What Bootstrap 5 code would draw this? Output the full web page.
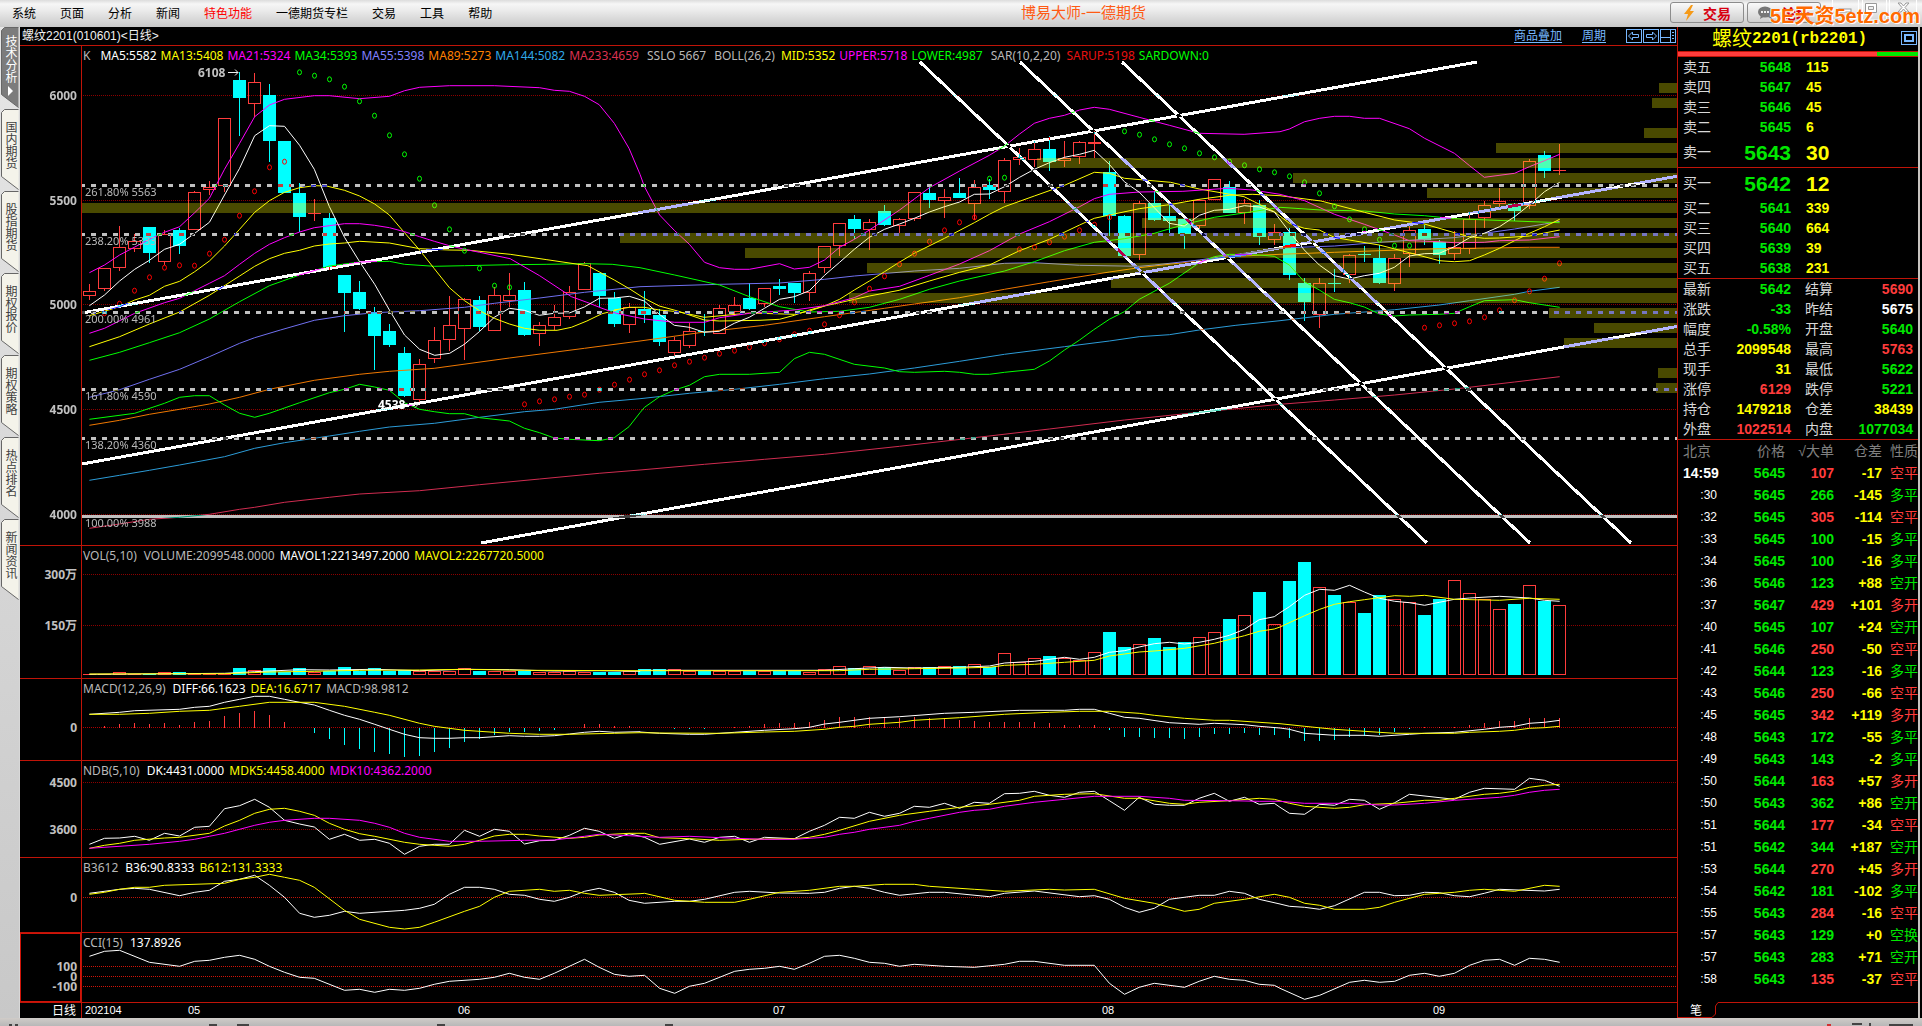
<!DOCTYPE html>
<html lang="zh-CN">
<head>
<meta charset="utf-8">
<meta name="viewport" content="width=device-width, initial-scale=1">
<title>博易大师-一德期货</title>
<link rel="stylesheet" href="https://cdn.jsdelivr.net/npm/bootstrap@5.3.0/dist/css/bootstrap.min.css">
<script src="https://cdn.jsdelivr.net/npm/bootstrap@5.3.0/dist/js/bootstrap.bundle.min.js"></script>
<style>
:root{--line:#c01408;--up:#ff3c3c;--dn:#00e800;--yl:#ffff00}
body{background:#000;color:#d8d8d8;font:12px/1 "Liberation Sans","Noto Sans CJK SC",sans-serif;overflow-x:hidden}
button{font-family:inherit}
.topbar{height:27px;background:linear-gradient(#dcdcdc 0,#f6f6f6 4px,#ececec 10px,#c8c8c8 27px);padding-left:12px}
.topbar .menu{gap:24px}
.topbar a{color:#000;text-decoration:none}
.topbar a.hot{color:#f00}
.apptitle{font-size:15px;color:#ff5a14;left:1021px;top:5px}
.tbtn{width:74px;height:21px;border:1px solid #8c8c8c;border-radius:3px;background:linear-gradient(#fafafa,#cfcfcf);color:#d80010;font:bold 14px/1 "Noto Sans CJK SC",sans-serif;padding:0}
.tools{right:101px;top:2px;gap:3px}
.wctl{right:4px;top:0}
.mark5{right:2px;top:5px;font:bold 20px/22px "Liberation Sans","Noto Sans CJK SC",sans-serif;color:#ff6a00;text-shadow:1px 1px 0 #fff,-1px 0 0 #fff}
.side{width:20px;background:linear-gradient(#e6e6e6,#c8c8c8);border-right:1px solid #d8d8d8}
.vtab{display:block;width:18px;height:81px;margin:0 0 1px 1px;padding:0;border:0;background:none;color:#404040;font-size:12px;line-height:16px;position:relative}
.vtab svg{position:absolute;left:0;top:0}
.vtab span{position:relative;display:block;writing-mode:vertical-rl;text-orientation:upright;text-align:start;padding-top:12px;margin:0 auto;height:81px;width:16px}
.vtab.on{color:#fff}
.vtab.on span{padding-top:8px}
.titlebar{height:19px;border-bottom:1px solid var(--line);padding-left:2px;color:#f0f0f0;background:#000}
.titlebar a{color:#78b8ff;text-decoration:underline;text-underline-offset:2px;margin-right:20px}
.pane{position:relative;border-bottom:1px solid var(--line);background:#000}
.pane svg{display:block;width:100%}
.legend-row{position:absolute;left:63px;top:0;height:20px;font:12px/20px "Noto Sans",sans-serif;gap:8px;white-space:nowrap;color:#b8b8b8}
.legend-row>span{display:flex;gap:5px}
.legend-row.tight>span{gap:4px}
.legend-row i{font-style:normal}
.legend-row i:first-child{margin-left:2px}
.w{color:#fff}.y{color:#ff0}.m{color:#f0f}.g{color:#0f0}.b{color:#8080ff}.o{color:#ff8000}.s{color:#30a8e8}.p{color:#dc3250}.r{color:#e81010}
.quote{width:241px;border-left:1px solid var(--line);background:#000}
.edge{width:4px;background:linear-gradient(90deg,#c8c4c0 2px,#000 2px)}
.qtitle{height:24px;color:#ff0;font-size:20px;line-height:24px;padding:0 1px 0 34px}
.qtitle span{font:bold 16px/24px "Liberation Mono",monospace}
.force{height:6px;border-top:1px solid var(--line);border-bottom:1px solid var(--line)}
.force i{background:var(--up)}
.force b{background:#00e800}
.quote table{width:240px;table-layout:fixed;border-collapse:collapse;font-size:14px;line-height:14px}
.quote td,.quote th{padding:0;height:20px;vertical-align:middle;white-space:nowrap;font-weight:normal}
.quote td:first-child:not(.tm),.quote th:first-child{padding-left:5px}
.quote .vcol{padding-left:15px;text-align:left}
.quote .lab2{padding-left:14px}
.quote .vend{padding-right:5px}
.quote .num{font-weight:bold;text-align:right}
.quote .vcol.num{text-align:left}
.quote .big td{height:30px}
.quote .big .num{font-size:21px;line-height:21px}
.sect{border-bottom:1px solid var(--line)}
.quote .ticks td,.quote .ticks th{height:22px}
.ticks th{color:#808080}
.quote .tm{font-size:12px;text-align:right;padding-right:2px}
.quote .tm0{font-weight:bold}
.up{color:var(--up)}.dn{color:var(--dn)}.yl{color:var(--yl)}.wh{color:#fff}
.foot{height:8px;background:linear-gradient(#d0ccc8,#b8b8b8)}
.axis{fill:#c0c0c0;font:bold 12px "Noto Sans","Noto Sans CJK SC",sans-serif}
.axis.lit{fill:#fff}
.fib{fill:#b8b8b8;font:11px "Noto Sans",sans-serif}
.day{fill:#fff;font:11px "Liberation Sans","Noto Sans CJK SC",sans-serif}
.day.per{font-size:12px}
.diff{mix-blend-mode:difference;fill:none}
svg{isolation:isolate}
</style>
</head>
<body>
<svg width="0" height="0" class="position-absolute"><defs>
<path id="tab" d="M17.500.5H3.500L.500 3.500V67.500L17.500 80.500"/>
</defs></svg>
<div class="d-flex flex-column min-vh-100">
<header class="topbar d-flex align-items-center position-relative">
  <nav class="menu d-flex"><a href="#">系统</a><a href="#">页面</a><a href="#">分析</a><a href="#">新闻</a><a href="#" class="hot">特色功能</a><a href="#">一德期货专栏</a><a href="#">交易</a><a href="#">工具</a><a href="#">帮助</a></nav>
  <div class="apptitle position-absolute">博易大师-一德期货</div>
  <div class="tools d-flex position-absolute">
    <button class="tbtn d-flex align-items-center justify-content-center gap-2"><svg width="12" height="16"><path d="M8 0L1 9h4L3 16l8-10H7l3-6z" fill="#f59a18"/></svg>交易</button>
    <button class="tbtn d-flex align-items-center justify-content-center gap-2"><svg width="16" height="14"><ellipse cx="7" cy="6" rx="7" ry="5.500" fill="#777"/><path d="M3 9l-1 4 5-3zM12 5c4 0 5 5 1 6l1 2-4-2z" fill="#777"/><path d="M3 6h2M6 6h2M9 6h2" stroke="#eee" stroke-width="2"/></svg>论坛</button>
  </div>
  <svg class="wctl position-absolute" width="88" height="24"><g fill="none" stroke="#fff" stroke-width="1"><path d="M2.500 0V20H28.500V0M32.500 0V20H56.500V0M59.500 0V20H86.500V0"/></g><rect x="9" y="9" width="12" height="3" fill="#fff" stroke="#999"/><path d="M35.500 3.500h11v9h-11zM38.500 6.500h5v3h-5z" fill="#fff" fill-rule="evenodd" stroke="#999"/><path d="M68 3h3l2.500 3 2.500-3h3l-4 4.500 4 4.500h-3l-2.500-3-2.500 3h-3l4-4.500z" fill="#fff" stroke="#999"/></svg>
  <div class="mark5 position-absolute">5E天资5etz.com</div>
</header>
<div class="d-flex flex-grow-1">
  <aside class="side flex-shrink-0" id="side"></aside>
  <main class="flex-grow-1 overflow-hidden">
    <div class="titlebar d-flex align-items-center"><span>螺纹2201(010601)&lt;日线&gt;</span>
      <div class="ms-auto d-flex align-items-center"><a href="#">商品叠加</a><a href="#">周期</a>
      <svg width="51" height="16" fill="none" stroke="#78b8ff" shape-rendering="crispEdges"><path d="M.5 1.500h15v13H.5zM17.500 1.500h15v13h-15zM34.500 1.500h15v13h-15zM34.500 9.500h10M44.500 1.500v13"/><path d="M46 4.500h2M46 7.500h2M46 10.500h2"/><path d="M2.500 8L6.500 4v2.500h6v3h-6V12zM30.500 8L26.500 4v2.500h-6v3h6V12z" shape-rendering="auto"/></svg></div>
    </div>
    <div class="pane"><svg id="main" height="499"></svg>
      <div class="legend-row tight d-flex"><span>K</span><span><i class="w">MA5:5582</i><i class="y">MA13:5408</i><i class="m">MA21:5324</i><i class="g">MA34:5393</i><i class="b">MA55:5398</i><i class="o">MA89:5273</i><i class="s">MA144:5082</i><i class="p">MA233:4659</i></span><span>SSLO 5667</span><span>BOLL(26,2) <i class="y">MID:5352</i><i class="m">UPPER:5718</i><i class="g">LOWER:4987</i></span><span>SAR(10,2,20) <i class="r">SARUP:5198</i><i class="g">SARDOWN:0</i></span></div></div>
    <div class="pane"><svg id="vol" height="132"></svg><div class="legend-row d-flex"><span>VOL(5,10) <i>VOLUME:2099548.0000</i><i class="w">MAVOL1:2213497.2000</i><i class="y">MAVOL2:2267720.5000</i></span></div></div>
    <div class="pane"><svg id="macd" height="81"></svg><div class="legend-row d-flex"><span>MACD(12,26,9) <i class="w">DIFF:66.1623</i><i class="y">DEA:16.6717</i><i>MACD:98.9812</i></span></div></div>
    <div class="pane"><svg id="ndb" height="96"></svg><div class="legend-row d-flex"><span>NDB(5,10) <i class="w">DK:4431.0000</i><i class="y">MDK5:4458.4000</i><i class="m">MDK10:4362.2000</i></span></div></div>
    <div class="pane"><svg id="b3612" height="74"></svg><div class="legend-row d-flex"><span>B3612 <i class="w">B36:90.8333</i><i class="y">B612:131.3333</i></span></div></div>
    <div class="pane"><svg id="cci" height="69"></svg><div class="legend-row d-flex"><span>CCI(15) <i class="w">137.8926</i></span></div></div>
    <div><svg id="days" class="d-block w-100" height="15"></svg></div>
  </main>
  <section class="quote flex-shrink-0 d-flex flex-column">
    <div class="qtitle d-flex">螺纹<span>2201(rb2201)</span><svg class="ms-auto mt-1" width="16" height="15" fill="none" stroke="#78b8ff" shape-rendering="crispEdges"><path d="M.5.5h15v13H.5z"/><path d="M4 4h8v6H4z" stroke-width="2"/></svg></div>
    <div class="force d-flex"><i style="width:83%"></i><b class="flex-grow-1"></b></div>
    <div class="sect"><table id="asks"></table></div>
    <div class="sect"><table id="bids"></table></div>
    <div class="sect"><table id="stats"></table></div>
    <table class="ticks" id="ticks"></table>
    <svg class="mt-auto d-block" width="240" height="16" fill="none" stroke="#c01408"><path d="M-1 15.500H34L37.500 12V4L40 .5H240"/><text x="12" y="13" fill="#fff" stroke="none" font-size="12">笔</text></svg>
  </section>
  <div class="edge flex-shrink-0"></div>
</div>
<footer class="foot"><svg class="d-block w-100" height="8" stroke="#444" stroke-width="2"><path d="M9 7h3M15 7h3M209 7h8M237 7h12M437 7h8M665 7h8M1852 6h10M1870 5v3M1889 7h24" fill="none"/><path d="M1827 7h4" stroke="#d03030"/></svg></footer>
</div>
<script>
/* Sidebar tabs */
document.getElementById('side').innerHTML=['技术分析','国内期货','股指期货','期权报价','期权策略','热点排名','新闻资讯'].map((t,i)=>
 `<button class="vtab ${i?'':'on'}"><svg width="18" height="81"><use href="#tab" fill="${i?'#f4f3ea':'#7c7c7c'}" stroke="#666"/>${i?'':'<path d="M7 59l5 5-5 5z" fill="#fff"/>'}</svg><span>${t}</span></button>`).join('');

/* Order book, summary and tick list */
const el=id=>document.getElementById(id);
const cols=w=>'<colgroup>'+w.map(x=>`<col style="width:${x}px">`).join('')+'</colgroup>';
const book=(id,rows)=>el(id).innerHTML=cols([50,63,127])+rows.map(([n,p,v])=>
 `<tr class="${n[1]=='一'?'big':''}"><td>${n}</td><td class="num dn">${p}</td><td class="num yl vcol">${v}</td></tr>`).join('');
book('asks',[['卖五',5648,115],['卖四',5647,45],['卖三',5646,45],['卖二',5645,6],['卖一',5643,30]]);
book('bids',[['买一',5642,12],['买二',5641,339],['买三',5640,664],['买四',5639,39],['买五',5638,231]]);
el('stats').innerHTML=cols([40,73,62,65])+[
 ['最新','5642','dn','结算','5690','up'],['涨跌','-33','dn','昨结','5675','wh'],['幅度','-0.58%','dn','开盘','5640','dn'],
 ['总手','2099548','yl','最高','5763','up'],['现手','31','yl','最低','5622','dn'],['涨停','6129','up','跌停','5221','dn'],
 ['持仓','1479218','yl','仓差','38439','yl'],['外盘','1022514','up','内盘','1077034','dn']].map(r=>
 `<tr><td>${r[0]}</td><td class="num ${r[2]}">${r[1]}</td><td class="lab2">${r[3]}</td><td class="num vend ${r[5]}">${r[4]}</td></tr>`).join('');
const T=`14:59 5645 107 -17 空平|:30 5645 266 -145 多平|:32 5645 305 -114 空平|:33 5645 100 -15 多平|:34 5645 100 -16 多平|:36 5646 123 +88 空开|:37 5647 429 +101 多开|:40 5645 107 +24 空开|:41 5646 250 -50 空平|:42 5644 123 -16 多平|:43 5646 250 -66 空平|:45 5645 342 +119 多开|:48 5643 172 -55 多平|:49 5643 143 -2 多平|:50 5644 163 +57 多开|:50 5643 362 +86 空开|:51 5644 177 -34 空平|:51 5642 344 +187 空开|:53 5644 270 +45 多开|:54 5642 181 -102 多平|:55 5643 284 -16 空平|:57 5643 129 +0 空换|:57 5643 283 +71 空开|:58 5643 135 -37 空平`;
el('ticks').innerHTML=cols([41,66,49,48,36])+'<tr><th>北京</th><th class="text-end">价格</th><th class="text-end">√大单</th><th class="text-end">仓差</th><th class="text-end">性质</th></tr>'+
T.split('|').map((s,i)=>{const [t,p,v,d,k]=s.split(' ');const c=(k=='空平'||k=='多开')?'up':'dn';
 return `<tr><td class="${i?'tm':'tm0'} wh">${t}</td><td class="num dn">${p}</td><td class="num ${c}">${v}</td><td class="num yl">${d}</td><td class="text-end ${c}">${k}</td></tr>`}).join('');

/* Chart data. y values are stored in thirds of a pixel; curves are split into
   tiles, each with its own origin (x0,y0) and x density. */
const F={a:[0,0,2.45],b:[640,0,2.45],c:[1280,0,2.442],d:[0,330,2.45],e:[640,330,2.45],f:[1280,330,2.442],g:[0,660,2.45],h:[640,660,2.45],k:[1280,660,2.442],p:[400,230,3],q:[1080,130,3]};
const X=i=>89.5+15*i;
function curve(src,color){
 let fr,pts=[];
 src.trim().split(/\s+/).forEach(t=>{ if(F[t]){fr=F[t];return}
  const [x,y]=t.split(',').map(Number); pts.push((fr[0]+x/fr[2]).toFixed(1)+','+(fr[1]+y/3).toFixed(1)); });
 return `<polyline points="${pts.join(' ')}" fill="none" stroke="${color}"/>`;
}
const grid=(ys,c='#8c0000')=>ys.map(y=>`<path d="M83 ${y}.5H4000" stroke="${c}" stroke-dasharray="1 1" shape-rendering="crispEdges"/>`).join('');
const lab=(y,t)=>`<text class="axis" x="77" y="${y+5}" text-anchor="end">${t}</text>`;
const axisLine='<path d="M81.500 0V1100" stroke="#c01408" shape-rendering="crispEdges"/>';
const put=(id,top,s)=>el(id).innerHTML=`<g transform="translate(-20,${-top})"><rect x="0" y="0" width="5000" height="1100" fill="#000"/>${s}</g>`;

/* candles: open/close box top, bottom, wick top, wick bottom */
const C=[[0,`r872,889,852,899 r805,868,805,873 r742,805,678,812 r722,748,703,755 c682,758,682,788 r703,787,690,795 c690,738,684,762 r577,689,573,689 r560,569,544,585 r355,559,355,577 c240,293,216,407 r247,311,219,350 c285,422,252,486 c423,578,423,578 c579,650,549,695 r640,643,597,662 c654,802,640,810 c826,878,826,995 c877,926,843,930 c936,1007,921,1110 c993,1035,972,1041 c1059,1188,1041,1190 r1093,1199,1077,1205`],
[690,`r331,388,292,399 r286,331,198,363 r208,298,203,390 c210,290,198,303 r196,304,172,304 r196,214,129,230 c180,315,156,318 r286,313,277,348 r262,289,226,300 r187,262,168,266 r100,181,96,181 c129,198,129,231 c204,281,186,290 r231,286,220,309 c237,254,183,279 c255,335,237,348 r331,370,320,382 r304,349,280,355 c303,307,252,318 r235,313,225,313 r226,245,202,256 c204,237,160,240`],
[0,`r865,913,865,920 c858,866,837,884 c849,878,849,909 r820,880,814,903 r739,805,739,818 r670,737,670,767 c657,686,645,717 r667,689,658,749 c633,674,615,678 r658,679,653,700 r577,658,577,664 c579,599,562,624 r590,602,567,654 c579,593,533,593 r562,613,540,660 c556,570,538,597 r481,575,474,609 r472,479,444,494 r448,481,423,500 c447,486,408,513 r475,482,423,500 r427,470,422,491 r427,433,394,474`],
[390,`c126,258,93,318 c258,377,255,377 r220,376,213,389 c219,269,180,273 c259,272,226,312 c267,312,267,357 r211,289,206,300 r148,211,148,211 c171,249,153,249 r220,249,208,281 c225,321,210,345 r307,331,282,344 c306,435,294,449 c459,516,444,572 r460,556,444,594 c459,462,417,486 r376,436,371,458 c373,376,348,396 c384,459,346,462 r385,463,372,483 r301,373,286,410 c297,331,286,345`],
[0,`c726,765,720,791 r742,761,694,779 r658,748,635,761 r616,653,603,684 r604,613,564,625 c612,633,608,663 r484,617,478,626 c465,513,453,533 r510,512,432,525`]];
const candles=[];
C.forEach(([o,s])=>s.split(' ').forEach(t=>candles.push([t[0],...t.slice(1).split(',').map(v=>Math.round((+v+o)/3))])));
const boxAt=(i,k,t,b)=>{const x=X(i);b=Math.max(b,t+1);
 return k=='c'?`<rect x="${x-6.5}" y="${t}" width="13" height="${b-t}" fill="#0ff"/>`
 :b-t<3?`<rect x="${x-6.5}" y="${t}" width="13" height="${b-t}" fill="#ff3c3c"/>`
 :`<rect x="${x-6}" y="${t+.5}" width="12" height="${b-t-1}" fill="none" stroke="#ff3c3c"/>`};
let cs='';
candles.forEach(([k,t,b,wt,wb],i)=>{const c=k=='c'?'#0ff':'#ff3c3c',x=X(i);
 cs+=boxAt(i,k,t,b)+`<path d="M${x} ${wt}V${t}M${x} ${b}V${wb}" stroke="${c}"/>`;});

const bands=[[83,1659],[98,1652],[128,1644],[143,1496],[158,1037],[173,1293],[188,1427],[203,82],[218,1142],[233,620],[248,745],[263,867],[278,1111],[293,849],[308,1549],[323,1594],[338,1564],[368,1658],[383,1656]]
 .map(([y,x])=>`<rect x="${x}" y="${y}" width="3000" height="10" fill="rgba(255,255,0,.29)"/>`).join('');

const sar=(i0,c,s)=>s.split(' ').map((v,n)=>`<ellipse cx="${X(i0+n)}" cy="${(v/3).toFixed(1)}" rx="2" ry="2.500" fill="none" stroke="${c}" stroke-width="1"/>`).join('');
const sars=sar(1,'#f00','940 911 872 832 803 796 797 761 719 647 574 502 485')
+sar(14,'#0f0','217 227 238 260 304 347 406 463 536 616 688 752 805 857 862')
+sar(29,'#f00','1213 1204 1198 1190 1184 1169 1154 1139 1123 1111 1096 1085 1073 1061 1052 1042 1030 1018 1003 992 973 946 907 866 829 793 761 725 691 667 652')
+sar(60,'#0f0','536 533')+sar(62,'#f00','748 742 727 710 691 674 652')
+sar(69,'#0f0','394 404 418 433 445 460 472 485 496 508 517 529 547 580 619 658 688 719 737 737')
+sar(89,'#f00','983 976 970 964 952 931 901 874 836 790');

const mas=[
['#d02c50','d 219,595 293,582 366,568 440,562 513,553 587,538 624,532 697,517 807,502 881,492 1028,482 1175,464 1322,447 1468,430 e 0,420 158,403 305,388 452,373 636,349 820,323 1003,297 1187,270 1370,247 f 0,223 133,210 280,195 426,177 573,156 683,140'],
['#2c9cd8','d 219,451 293,436 366,421 440,405 550,380 624,355 697,338 807,318 881,304 954,291 1064,280 1175,262 1285,245 1358,238 1468,217 e 0,206 121,190 232,178 342,163 452,146 562,132 672,114 783,94 893,73 1040,50 1150,33 1223,20 1297,14 1370,0 b 1460,976 c 0,962 133,943 280,929 389,915 463,902 573,883 609,874 683,862'],
['#f07800','d 219,286 293,271 366,253 440,238 513,222 587,202 660,178 770,151 881,133 954,124 1064,115 1248,84 1432,55 e 0,33 b 158,996 305,976 452,950 599,925 672,912 783,893 893,868 1003,845 1150,816 1223,803 1330,788 1440,770 c 0,763 133,757 243,752 389,746 499,744 609,742 683,742'],
['#7070f0','d 219,202 293,179 366,148 440,118 513,80 587,40 624,23 687,0 a 770,961 844,947 918,938 1028,932 1138,922 1211,910 1322,894 1432,877 b 0,860 195,853 342,849 452,838 525,828 672,813 783,805 893,790 966,788 1077,796 1223,799 1260,795 1370,780 c 0,744 133,738 243,727 353,718 426,713 499,700 573,687 646,672 683,664'],
['#0f0','d 219,91 293,67 366,38 440,8 a 513,957 587,905 660,857 734,825 807,798 881,786 954,784 991,793 1064,799 1138,797 1248,794 1340,793 1432,791 1500,793 b 0,803 85,825 195,855 268,890 342,920 415,936 489,934 562,922 636,898 709,868 783,843 893,813 966,785 1040,752 1113,727 1187,716 1260,700 1335,673 1407,652 1480,639 c 0,622 100,630 206,633 280,642 353,647 426,656 573,663 683,668'],
['#0f0','d 219,268 330,250 403,220 440,202 477,197 513,197 550,225 587,250 624,262 660,250 734,218 807,188 844,178 881,163 918,171 954,181 991,218 1028,238 1064,245 1101,251 1138,251 1175,263 1248,273 1285,295 1322,308 1358,324 1395,328 1468,332 1505,323 1541,290 e 0,248 11,232 48,200 85,180 121,166 158,140 195,133 268,133 342,127 378,86 415,67 452,73 525,103 599,114 636,125 672,127 746,124 783,127 819,133 856,133 893,127 966,118 1003,93 1040,60 1077,30 q 40,600 88,568 133,545 178,508 268,460 358,398 403,380 448,373 538,375 583,379 628,405 673,455 718,480 763,508 808,518 853,531 898,552 943,558 988,555 1078,553 c 426,940 463,920 499,902 573,899 609,908 683,922'],
['#ff0','d 219,50 293,20 a 366,972 440,936 513,886 587,828 624,799 660,776 697,760 734,751 770,738 807,732 844,729 881,724 954,729 1028,746 1100,750 1150,751 1250,763 1340,779 1440,797 p 600,127 643,150 688,176 733,205 778,228 833,243 913,270 958,273 1080,271 b 342,958 378,946 415,930 452,918 489,908 562,888 635,871 709,843 783,817 856,795 930,752 1003,718 1077,675 1113,655 1150,645 1223,626 1297,614 1370,598 1444,586 1500,583 c 0,587 100,603 206,637 280,660 350,671 426,698 463,710 499,715 536,714 609,708 683,690'],
['#ff0','a 219,947 293,920 330,900 366,886 403,859 440,844 477,815 513,783 550,738 587,688 624,637 660,602 697,577 734,563 770,557 800,558 844,571 881,588 918,612 954,645 991,698 1028,750 1064,806 1101,863 1138,902 1175,932 1211,955 1248,972 1285,985 1322,991 1365,991 1400,982 1438,963 1475,941 1510,931 p 643,240 688,232 733,232 778,240 833,245 913,262 1048,249 b 378,943 415,933 452,918 489,898 525,870 562,843 599,815 635,787 672,760 746,715 819,668 856,643 893,620 966,588 1040,556 1113,517 1150,520 1187,535 1300,547 1370,567 1480,590 q 583,245 628,280 673,295 718,300 763,322 808,330 898,345 988,368 1078,392 c 426,785 463,782 499,765 536,745 573,722 609,700 646,680 683,658'],
['#f0f','a 219,1000 256,985 330,940 403,908 440,895 477,872 513,850 550,827 587,793 624,760 660,733 697,713 734,696 770,683 807,677 844,671 881,671 918,676 954,683 991,695 1028,710 1064,724 1101,737 1138,748 1175,757 1250,776 1322,827 1400,890 1438,907 1475,925 1510,940 b 11,957 85,967 158,967 195,953 268,940 378,930 452,917 525,893 562,873 636,859 709,826 783,792 856,752 930,702 1003,665 1077,620 1113,596 1150,583 1223,576 1330,574 1440,565 1500,570 c 0,583 60,602 133,643 206,673 280,705 316,722 389,725 426,728 499,727 536,722 609,720 683,710'],
['#f0f','a 219,818 256,795 293,765 366,718 403,697 440,680 477,638 513,595 550,508 587,430 624,350 660,315 697,298 770,287 807,287 881,296 954,289 991,272 1028,262 1101,257 1211,257 1322,263 1358,271 1395,274 1432,289 1468,314 1505,370 1541,445 b 0,523 11,560 48,645 85,692 121,733 158,787 195,803 232,808 268,808 342,791 378,807 415,802 452,780 489,742 525,718 562,690 636,630 709,563 783,513 856,466 893,438 930,402 966,370 1003,355 1040,346 1077,330 1113,322 1150,328 1223,352 1297,376 1370,400 1480,403 c 0,395 23,387 60,365 97,355 133,349 170,349 206,355 243,355 316,386 353,415 426,460 463,497 499,532 573,520 609,500 646,482 683,463'],
['#fff','a 219,917 256,885 293,843 330,808 366,781 403,748 440,733 477,700 513,667 550,585 587,505 624,407 660,377 697,379 734,436 770,508 807,620 844,712 881,785 918,853 954,930 991,1005 d 1028,58 p 104,376 149,370 193,343 238,305 283,262 328,235 373,241 418,256 463,250 508,249 553,231 598,205 643,204 688,199 733,213 778,253 823,286 868,292 913,307 958,304 1003,280 1048,262 b 305,925 342,898 378,890 415,872 452,826 489,787 525,748 562,712 599,688 636,672 672,655 709,636 746,620 783,606 819,583 856,582 893,560 930,532 966,508 1003,488 1040,472 1077,463 1113,451 q 88,103 133,155 178,187 223,233 268,280 313,288 358,256 403,241 448,238 493,227 538,231 583,246 628,305 673,360 718,405 763,437 808,447 853,437 898,430 943,412 988,378 1033,371 c 389,760 426,740 463,713 499,700 536,680 573,650 609,615 646,575 683,547']
].map(([c,s])=>curve(s,c)).join('');

const fib=[[185,'261.80% 5563'],[234,'238.20% 5333'],[312,'200.00% 4961'],[389,'161.80% 4590'],[438,'138.20% 4360']];
const fibs=fib.map(([y])=>`<path class="diff" d="M80 ${y}.5H4000" stroke="#c0c0c0" stroke-width="3" stroke-dasharray="5 6"/>`).join('')
 +'<path class="diff" d="M80 516.500H4000" stroke="#c0c0c0" stroke-width="3"/>'
 +[...fib,[516,'100.00% 3988']].map(([y,t])=>`<text class="fib" x="85" y="${y+11}">${t}</text>`).join('');
const ln=(x1,y1,x2,y2,w)=>`<path class="diff" d="M${x1} ${y1}L${x2} ${y2}" stroke="#fff" stroke-width="${w}" shape-rendering="crispEdges"/>`;
const trends=ln(82,313,1477,62,3)+ln(82,464,2000,118,3)+ln(481,543,2000,268,3)+ln(920,62,1427,543,3)+ln(1020,62,1530,543,3)+ln(1122,62,1631,543,3);
const noAxis='<rect x="20" y="0" width="61" height="1100" fill="#000"/>'+axisLine;

put('main',46,`<g shape-rendering="crispEdges">${grid([95,200,304,409,514])}${cs}</g>${mas}${sars}${bands}${trends}${fibs}${noAxis}`
 +lab(95,'6000')+lab(200,'5500')+lab(304,'5000')+lab(409,'4500')+lab(514,'4000')
 +'<text class="axis" x="198" y="77">6108</text><path d="M228 72.500h10M235 69.500l3 3-3 3" fill="none" stroke="#eee"/><text class="axis lit" x="378" y="409">4538</text><path d="M409 404.500h9M415 401.500l3 3-3 3" fill="none" stroke="#eee"/>');

/* volume: top of each bar */
const V=[2021,2021,2017,2021,2021,2017,2016,2021,2022,2021,2004,2010,2004,2016,2004,2016,2013,2001,2013,2004,2013,2010,2013,2013,2013,2004,2013,2013,2013,2013,2015,2015,2014,2015,2016,2016,2013,2008,2007,2008,2013,2013,2013,2013,2012,2013,2013,2013,2016,2006,1999,2004,1999,2001,2011,2002,2002,1998,1998,1993,2000,1959,1986,1975,1968,1973,1980,1957,1896,1941,1933,1914,1941,1926,1912,1897,1857,1846,1776,1873,1743,1687,1762,1785,1807,1839,1785,1798,1807,1845,1798,1741,1780,1798,1828,1812,1756,1803,1816];
put('vol',546,`<g shape-rendering="crispEdges">${grid([574,625])}${V.map((v,i)=>boxAt(i,candles[i][0],Math.round(v/3),675)).join('')}</g>`
 +curve('g 219,43 550,40 624,35 734,29 807,30 918,28 1028,32 1138,28 1248,29 1358,33 1468,32 1568,34 h 0,31 452,31 525,26 599,22 672,24 783,22 e 856,1008 893,999 966,994 1040,982 1077,988 1113,982 1150,967 1187,962 1223,951 1260,941 1297,937 1334,942 1370,937 1407,928 1444,916 1481,898 1517,869 1554,860 f 0,848 23,830 60,796 97,778 133,781 170,766 206,786 243,805 280,814 316,818 353,826 389,817 426,808 463,804 536,799 609,804 646,811 683,814','#fff')
 +curve('g 219,42 550,41 660,36 770,34 881,31 1028,30 1138,28 1285,31 1568,32 h 0,32 489,32 562,28 672,26 783,24 856,22 e 893,1006 966,1003 1040,997 1113,991 1150,978 1187,972 1223,966 1260,963 1334,955 1407,940 1481,917 1517,904 1554,897 f 0,891 60,857 97,838 133,823 170,815 206,809 280,797 316,799 353,796 426,808 536,811 609,805 683,808','#ff0')
 +noAxis+lab(574,'300万')+lab(625,'150万'));

const H=[202,197,192,189,192,189,195,186,183,168,159,153,165,186,204,219,237,255,267,276,282,291,288,276,264,246,237,225,216,216,213,210,204,192,192,197,197,203,205,207,207,207,202,200,198,192,189,189,186,180,171,171,171,171,174,171,174,174,180,183,186,186,186,186,189,195,195,195,210,231,231,234,234,237,231,222,222,219,225,225,234,243,243,240,231,228,225,216,207,201,201,201,195,189,183,183,174,174,174];
put('macd',679,`<g shape-rendering="crispEdges">${grid([727],'#b00000')}${H.map((v,i)=>v==202?'':`<path d="M${X(i)} 727.500V${Math.round(660+v/3)}" stroke="${v>202?'#0ff':'#ff3c3c'}"/>`).join('')}</g>`
 +curve('g 219,163 293,157 330,152 440,148 477,142 513,139 550,127 587,118 624,109 660,109 697,118 734,127 770,135 807,151 844,166 881,178 918,193 954,208 991,223 1028,233 1064,235 1101,235 1138,233 1175,233 1248,227 1285,229 1322,229 1358,227 1395,222 1432,217 1468,214 1505,217 1568,215 h 0,216 48,220 121,223 158,223 232,217 305,211 378,206 415,202 452,192 489,187 525,181 562,175 636,170 746,160 819,157 930,151 1040,151 1077,148 1113,148 1150,160 1187,172 1223,175 1297,188 1370,193 1407,190 1481,194 1517,199 k 0,204 23,208 60,220 133,226 206,226 243,229 316,223 353,220 426,217 499,208 536,202 573,199 609,190 646,187 683,181','#fff')
 +curve('g 219,163 293,163 366,160 440,154 513,151 587,139 660,127 770,127 844,139 918,157 954,166 1028,190 1064,199 1101,205 1138,211 1248,220 1322,223 1395,223 1505,220 h 0,218 48,219 195,220 305,216 378,214 452,208 489,202 525,199 562,193 636,187 672,181 783,173 893,163 1003,157 1077,154 1150,154 1223,160 1260,166 1334,175 1407,181 1444,181 k 0,191 60,199 133,208 206,214 280,220 426,220 463,217 536,214 573,211 609,205 646,203 683,199','#ff0')
 +noAxis+lab(727,'0'));

put('ndb',761,grid([782,829])
 +curve('g 219,553 256,535 293,534 330,529 366,541 403,520 440,528 477,502 513,499 550,446 587,437 624,418 660,442 697,481 734,492 770,501 807,538 844,523 881,541 918,538 954,550 991,583 1028,559 1064,553 1101,553 1138,511 1175,529 1211,508 1248,514 1285,552 1322,542 1358,541 1395,526 1432,505 1468,514 1505,535 1541,521 h 11,532 48,553 121,537 158,547 195,532 232,529 268,547 305,532 378,536 415,514 452,496 489,472 525,475 562,457 599,469 636,460 672,439 709,442 746,430 783,445 819,427 856,430 893,401 930,400 966,394 1003,406 1040,412 1077,397 1113,394 1150,422 1187,451 1223,412 1260,433 1297,436 1334,436 1370,415 1407,400 1444,424 1481,412 1517,433 1554,430 k 0,442 23,460 60,463 97,433 133,436 170,418 206,421 243,448 280,428 316,403 426,418 463,397 499,385 573,388 609,355 646,361 683,379','#fff')
 +curve('g 219,565 256,556 293,550 330,541 403,534 440,532 513,520 550,498 587,481 624,460 660,448 697,445 734,454 770,466 807,490 844,508 881,521 918,529 991,547 1028,553 1101,559 1138,553 1175,541 1211,528 1248,523 1285,523 1322,528 1395,535 1432,532 1468,525 1541,520 h 11,520 48,533 121,536 195,541 268,538 378,536 415,532 452,523 489,511 562,484 636,466 709,454 783,442 856,433 930,421 966,409 1040,403 1113,401 1187,415 1223,415 1297,430 1334,433 1370,427 1444,422 1517,415 1554,418 k 23,430 60,439 133,445 170,442 206,434 280,430 353,421 389,421 426,415 499,403 536,400 573,394 609,382 646,376 683,373','#ff0')
 +curve('g 219,565 366,553 440,544 477,538 513,529 550,520 587,508 624,496 660,487 697,481 770,475 807,475 881,481 918,490 954,502 991,520 1028,532 1101,544 1175,544 1285,541 1358,540 1432,529 1468,523 1541,527 h 0,529 48,532 121,529 232,535 305,538 378,538 452,532 489,523 525,517 562,508 636,496 672,484 709,475 783,457 819,451 856,448 893,439 966,427 1040,418 1113,409 1223,409 1297,415 1334,421 1444,422 1517,424 k 0,424 60,430 170,430 243,435 280,435 353,430 426,421 536,412 573,406 609,397 646,391 683,388','#f0f')
 +noAxis+lab(782,'4500')+lab(829,'3600'));

put('b3612',858,grid([897],'#c01408')
 +curve('g 219,700 293,688 330,685 366,688 440,707 477,697 513,691 550,664 587,658 624,646 660,676 697,712 734,760 770,772 807,766 844,754 881,760 991,751 1028,745 1064,733 1101,703 1138,682 1175,682 1211,688 1248,703 1285,706 1322,718 1358,724 1395,712 1432,694 1468,685 1505,697 1541,721 h 11,730 85,724 121,724 158,718 232,697 268,694 342,699 415,700 452,697 489,685 525,679 562,685 599,697 636,706 709,697 746,697 856,710 893,700 966,693 1077,710 1113,707 1150,718 1187,742 1223,757 1260,745 1297,718 1370,706 1407,706 1444,694 1481,700 1517,718 k 0,732 23,739 60,742 97,748 133,737 206,697 243,697 280,707 316,706 353,697 389,698 426,707 463,710 499,700 536,688 646,693 683,688','#fff')
 +curve('g 219,703 256,697 293,688 330,682 366,682 403,676 550,670 587,658 624,652 660,643 697,652 734,661 770,682 844,751 881,778 954,802 991,807 1028,802 1064,787 1138,754 1175,739 1211,712 1248,694 1322,688 1358,694 1395,691 1432,700 1468,706 h 0,701 11,700 85,721 158,727 232,727 268,718 342,697 415,691 489,679 525,679 599,673 672,673 709,679 819,688 893,694 1003,688 1040,690 1113,688 1187,715 1260,730 1334,754 1370,748 1407,730 1481,718 1554,703 k 23,712 60,730 97,736 133,748 206,748 243,742 280,727 353,703 426,697 463,691 499,688 573,694 646,676 683,679','#ff0')
 +noAxis+lab(897,'0'));

put('cci',933,grid([966,976,986],'#d01408')
 +curve('g 219,889 256,874 293,871 366,907 440,919 477,904 513,901 550,892 587,886 624,898 660,919 697,937 734,952 770,955 844,991 881,988 918,997 954,988 991,991 1028,985 1064,973 1101,964 1175,958 1211,952 1248,940 1285,952 1322,958 1358,940 1432,898 1468,922 1505,943 1541,949 h 11,946 48,985 85,1000 121,979 158,970 232,934 268,928 305,925 342,919 378,928 415,910 452,889 489,886 525,895 562,907 599,910 636,919 672,913 746,919 819,922 893,913 930,904 966,904 1040,916 1113,916 1150,970 1187,1003 1223,982 1260,970 1334,982 1370,964 1407,949 1444,958 1481,961 1517,973 1554,976 k 0,985 60,1018 97,1006 170,967 206,961 243,967 280,964 316,946 353,940 389,949 426,940 463,916 499,901 536,898 573,916 609,895 646,898 683,907','#fff')
 +noAxis+'<rect x="20.500" y="933.500" width="60" height="68" fill="none" stroke="#d01408"/>'+lab(966,'100')+lab(976,'0')+lab(986,'-100'));

put('days',1003,axisLine+'<text x="76" y="1015" text-anchor="end" class="day per">日线</text>'
 +[[85,'202104'],[188,'05'],[458,'06'],[773,'07'],[1102,'08'],[1433,'09']].map(([x,t])=>`<text class="day" x="${x}" y="1014">${t}</text>`).join(''));
</script>
</body>
</html>
